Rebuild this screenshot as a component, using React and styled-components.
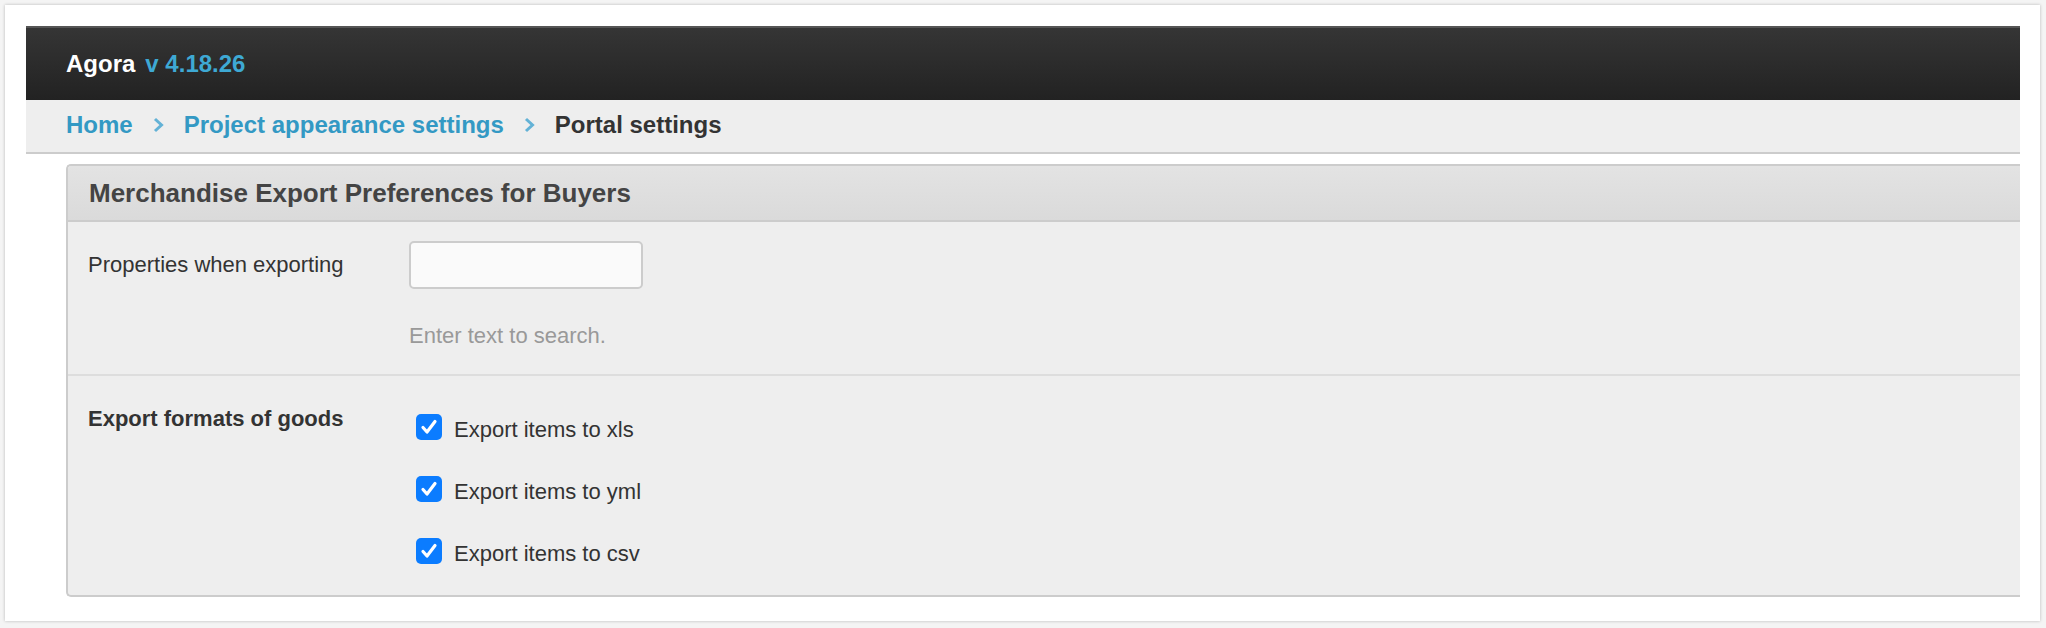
import React from "react";
import styled, { createGlobalStyle } from "styled-components";

const GlobalStyle = createGlobalStyle`
  html, body {
    margin: 0;
    padding: 0;
    background: #f4f4f4;
  }
  body {
    font-family: "Liberation Sans", Arial, sans-serif;
  }
`;

const Frame = styled.div`
  margin: 5px 6px 6px 5px;
  width: 2035px;
  height: 616px;
  box-sizing: border-box;
  background: #fff;
  box-shadow: 0 0 3px rgba(0, 0, 0, 0.25);
  padding: 21px 20px 0 21px;
  overflow: hidden;
`;

const TopBar = styled.div`
  height: 72px;
  border-top: 2px solid #555;
  background: linear-gradient(to bottom, #353535, #222);
  display: flex;
  align-items: center;
  padding-left: 40px;
  font-size: 24px;
  font-weight: 700;
  color: #fff;
`;

const Version = styled.span`
  color: #3ea9d4;
  margin-left: 10px;
`;

const Crumbs = styled.nav`
  background: #eee;
  border-bottom: 2px solid #ccc;
  display: flex;
  align-items: center;
  padding: 0 0 2px 40px;
  height: 50px;
  font-size: 24px;
  font-weight: 700;
  gap: 20px;
`;

const Crumb = styled.a`
  color: ${(p) => (p.$current ? "#333" : "#3399c4")};
  text-decoration: none;
`;

const Chevron = () => (
  <svg width="11" height="16" viewBox="0 0 11 16">
    <polyline points="2,2 8.5,8 2,14" fill="none" stroke="#63b2d6" strokeWidth="3" />
  </svg>
);

const Panel = styled.section`
  margin: 10px 0 0 40px;
  border: 2px solid #ccc;
  border-right: none;
  border-radius: 5px 0 0 5px;
  background: #eee;
  overflow: hidden;
`;

const PanelHead = styled.h2`
  margin: 0;
  height: 54px;
  display: flex;
  align-items: center;
  padding-left: 21px;
  background: linear-gradient(to bottom, #e3e3e3, #dadada);
  border-bottom: 2px solid #ccc;
  font-size: 26px;
  font-weight: 700;
  color: #444;
`;

const Row = styled.div`
  display: grid;
  grid-template-columns: 321px 1fr;
  align-items: start;
  padding: ${(p) => p.$pad};
  border-top: ${(p) => (p.$first ? "none" : "2px solid #ddd")};
`;

const Label = styled.div`
  font-size: 22px;
  color: #333;
  font-weight: ${(p) => (p.$bold ? 700 : 400)};
  line-height: ${(p) => p.$lh || "normal"};
`;

const Field = styled.div`
  display: flex;
  flex-direction: column;
  align-items: flex-start;
`;

const TextInput = styled.input`
  width: 234px;
  height: 48px;
  box-sizing: border-box;
  border: 2px solid #ccc;
  border-radius: 5px;
  background: #fafafa;
  font-size: 20px;
  font-family: inherit;
`;

const Hint = styled.div`
  margin-top: 34px;
  font-size: 22px;
  color: #999;
`;

const Checks = styled.div`
  display: flex;
  flex-direction: column;
  gap: 36px;
  margin: 8px 0 0 7px;
`;

const CheckItem = styled.label`
  display: flex;
  align-items: center;
  gap: 12px;
  height: 26px;
  font-size: 22px;
  color: #333;
`;

const Box = styled.span`
  width: 26px;
  height: 26px;
  border-radius: 5px;
  background: #0b7cff;
  display: flex;
  align-items: center;
  justify-content: center;
  flex-shrink: 0;
`;

const CheckText = styled.span`
  padding-top: 5px;
`;

const Check = ({ children }) => (
  <CheckItem>
    <Box>
      <svg width="18" height="18" viewBox="0 0 18 18">
        <polyline points="3,9.5 7,14 15,3.5" fill="none" stroke="#fff" strokeWidth="3.2" strokeLinecap="round" strokeLinejoin="round" />
      </svg>
    </Box>
    <CheckText>{children}</CheckText>
  </CheckItem>
);

export default function App() {
  return (
    <>
      <GlobalStyle />
      <Frame>
        <TopBar>
          Agora<Version>v 4.18.26</Version>
        </TopBar>
        <Crumbs>
          <Crumb href="#">Home</Crumb>
          <Chevron />
          <Crumb href="#">Project appearance settings</Crumb>
          <Chevron />
          <Crumb $current>Portal settings</Crumb>
        </Crumbs>
        <Panel>
          <PanelHead>Merchandise Export Preferences for Buyers</PanelHead>
          <Row $first $pad="19px 0 25px 20px">
            <Label $lh="48px">Properties when exporting</Label>
            <Field>
              <TextInput type="text" />
              <Hint>Enter text to search.</Hint>
            </Field>
          </Row>
          <Row $pad="30px 0 31px 20px">
            <Label $bold>Export formats of goods</Label>
            <Checks>
              <Check>Export items to xls</Check>
              <Check>Export items to yml</Check>
              <Check>Export items to csv</Check>
            </Checks>
          </Row>
        </Panel>
      </Frame>
    </>
  );
}
